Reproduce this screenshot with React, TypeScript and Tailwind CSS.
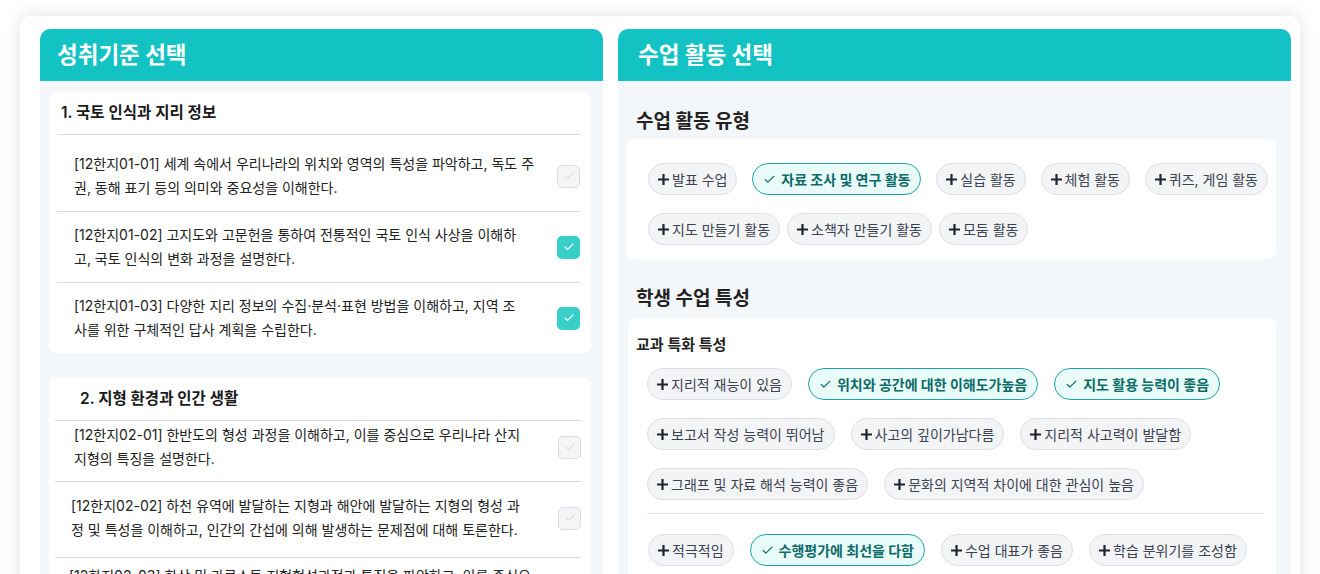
import React from 'react'
import { Check } from 'lucide-react'

interface Criterion {
  lines: string[]
  checked: boolean
}

const unit1: Criterion[] = [
  {
    lines: [
      '[12한지01-01] 세계 속에서 우리나라의 위치와 영역의 특성을 파악하고, 독도 주',
      '권, 동해 표기 등의 의미와 중요성을 이해한다.',
    ],
    checked: false,
  },
  {
    lines: [
      '[12한지01-02] 고지도와 고문헌을 통하여 전통적인 국토 인식 사상을 이해하',
      '고, 국토 인식의 변화 과정을 설명한다.',
    ],
    checked: true,
  },
  {
    lines: [
      '[12한지01-03] 다양한 지리 정보의 수집·분석·표현 방법을 이해하고, 지역 조',
      '사를 위한 구체적인 답사 계획을 수립한다.',
    ],
    checked: true,
  },
]

const unit2: Criterion[] = [
  {
    lines: [
      '[12한지02-01] 한반도의 형성 과정을 이해하고, 이를 중심으로 우리나라 산지',
      '지형의 특징을 설명한다.',
    ],
    checked: false,
  },
  {
    lines: [
      '[12한지02-02] 하천 유역에 발달하는 지형과 해안에 발달하는 지형의 형성 과',
      '정 및 특성을 이해하고, 인간의 간섭에 의해 발생하는 문제점에 대해 토론한다.',
    ],
    checked: false,
  },
  {
    lines: [
      '[12한지02-03] 화산 및 카르스트 지형형성과정과 특징을 파악하고, 이를 중심으',
      '로 지형 경관의 가치와 보전 방안을 탐구한다.',
    ],
    checked: false,
  },
]

const activityRow1 = [
  { label: '발표 수업', selected: false },
  { label: '자료 조사 및 연구 활동', selected: true },
  { label: '실습 활동', selected: false },
  { label: '체험 활동', selected: false },
  { label: '퀴즈, 게임 활동', selected: false },
]

const activityRow2 = [
  { label: '지도 만들기 활동', selected: false },
  { label: '소책자 만들기 활동', selected: false },
  { label: '모둠 활동', selected: false },
]

const subjectTraits = [
  { label: '지리적 재능이 있음', selected: false },
  { label: '위치와 공간에 대한 이해도가높음', selected: true },
  { label: '지도 활용 능력이 좋음', selected: true },
  { label: '보고서 작성 능력이 뛰어남', selected: false },
  { label: '사고의 깊이가남다름', selected: false },
  { label: '지리적 사고력이 발달함', selected: false },
  { label: '그래프 및 자료 해석 능력이 좋음', selected: false },
  { label: '문화의 지역적 차이에 대한 관심이 높음', selected: false },
]

const generalTraits = [
  { label: '적극적임', selected: false },
  { label: '수행평가에 최선을 다함', selected: true },
  { label: '수업 대표가 좋음', selected: false },
  { label: '학습 분위기를 조성함', selected: false },
]

function PlusMark() {
  return (
    <svg width="11" height="11" viewBox="0 0 11 11" className="shrink-0">
      <path d="M5.5 0.8v9.4M0.8 5.5h9.4" stroke="#1f2430" strokeWidth="2.2" strokeLinecap="square" />
    </svg>
  )
}

function Chip({ label, selected }: { label: string; selected: boolean }) {
  if (selected) {
    return (
      <span className="inline-flex h-8 shrink-0 items-center gap-[5px] whitespace-nowrap rounded-full border border-[#1fa6a2] bg-[#e8fbf9] px-[10px] text-[14px] font-bold text-[#0d6b68]">
        <Check className="h-[13px] w-[13px] shrink-0" strokeWidth={2} />
        {label}
      </span>
    )
  }
  return (
    <span className="inline-flex h-8 shrink-0 items-center gap-[3px] whitespace-nowrap rounded-full border border-[#dcdfe5] bg-[#f3f4f6] px-[9px] text-[14px] text-[#3b4250]">
      <PlusMark />
      {label}
    </span>
  )
}

function Checkbox({ checked }: { checked: boolean }) {
  if (checked) {
    return (
      <span className="flex h-[23px] w-[23px] shrink-0 items-center justify-center rounded-[5px] bg-[#38cfc9]">
        <Check className="h-3 w-3 text-white" strokeWidth={2.2} />
      </span>
    )
  }
  return (
    <span className="flex h-[23px] w-[23px] shrink-0 items-center justify-center rounded-[5px] border border-[#d9dce2] bg-[#f4f5f7]">
      <Check className="h-3 w-3 text-[#cfd3da]" strokeWidth={2} />
    </span>
  )
}

function CriterionText({ lines }: { lines: string[] }) {
  return (
    <p className="flex-1 whitespace-nowrap text-[14px] leading-6 text-[#222]">
      {lines.map((line, i) => (
        <React.Fragment key={i}>
          {line}
          {i < lines.length - 1 && <br />}
        </React.Fragment>
      ))}
    </p>
  )
}

function PanelHeader({ title, pad }: { title: string; pad: string }) {
  return (
    <div className={`flex h-[52px] items-center rounded-t-[10px] bg-[#13c3c3] ${pad}`}>
      <h2 className="text-[22.5px] font-bold text-white">{title}</h2>
    </div>
  )
}

export default function App() {
  return (
    <div className="min-h-screen bg-white pt-4 font-[family-name:Inter,'Noto_Sans_CJK_KR',sans-serif]">
      <div className="ml-5 flex w-[1280px] gap-[15px] rounded-[10px] bg-white pl-5 pr-[9px] pt-[13px] shadow-[0_0_18px_rgba(0,0,0,0.13)]">
        {/* 성취기준 */}
        <section className="w-[563px] shrink-0">
          <PanelHeader title="성취기준 선택" pad="px-[17px]" />
          <div className="flex flex-col gap-6 bg-[#f3f7fa] pb-6 pl-[9px] pr-[12px] pt-[10px]">
            <div className="rounded-lg bg-white pl-2 pr-[11px]">
              <h3 className="border-b border-[#d6d9df] py-[10px] pl-1 text-[15.5px] font-semibold leading-[23px] text-[#1a1a1a]">
                1. 국토 인식과 지리 정보
              </h3>
              {unit1.map((item, i) => (
                <div
                  key={i}
                  className={`flex items-center pl-[17px] ${i === 0 ? 'pb-[11px] pt-[17px]' : 'py-[11px]'} ${i < unit1.length - 1 ? 'border-b border-[#d6d9df]' : ''}`}
                >
                  <CriterionText lines={item.lines} />
                  <Checkbox checked={item.checked} />
                </div>
              ))}
            </div>

            <div className="rounded-lg bg-white pl-[6px] pr-[10px]">
              <h3 className="border-b border-[#d6d9df] py-[10px] pl-[25px] text-[15.5px] font-semibold leading-[23px] text-[#1a1a1a]">
                2. 지형 환경과 인간 생활
              </h3>
              <div className="flex items-center border-b border-[#d6d9df] pb-[10px] pl-[19px] pt-[2px]">
                <CriterionText lines={unit2[0].lines} />
                <Checkbox checked={unit2[0].checked} />
              </div>
              <div className="flex items-center border-b border-[#d6d9df] pb-[15px] pl-[16px] pt-[12px]">
                <CriterionText lines={unit2[1].lines} />
                <Checkbox checked={unit2[1].checked} />
              </div>
              <div className="-mr-[3px] ml-[5px] flex items-center pb-[11px] pl-[9px] pt-[6px]">
                <CriterionText lines={unit2[2].lines} />
                <Checkbox checked={unit2[2].checked} />
              </div>
            </div>
          </div>
        </section>

        {/* 수업 활동 */}
        <section className="flex-1">
          <PanelHeader title="수업 활동 선택" pad="px-5" />
          <div className="bg-[#f3f7fa] pb-6 pt-[28px]">
            <h3 className="pl-[18px] text-[19px] font-bold leading-[26px] text-[#222]">수업 활동 유형</h3>
            <div className="ml-2 mr-[15px] mt-[4px] flex flex-col gap-[18px] rounded-lg bg-white pb-[14px] pl-[22px] pr-2 pt-6">
              <div className="flex justify-between">
                {activityRow1.map((c) => (
                  <Chip key={c.label} {...c} />
                ))}
              </div>
              <div className="flex gap-[7px]">
                {activityRow2.map((c) => (
                  <Chip key={c.label} {...c} />
                ))}
              </div>
            </div>

            <h3 className="mt-[27px] pl-[18px] text-[19px] font-bold leading-[26px] text-[#222]">학생 수업 특성</h3>
            <div className="ml-[10px] mr-[15px] mt-[6px] rounded-lg bg-white pb-6 pl-2 pr-3 pt-[17px]">
              <h4 className="text-[15px] font-semibold leading-5 text-[#222]">교과 특화 특성</h4>
              <div className="mt-[13px] flex flex-wrap gap-x-4 gap-y-[18px] pl-[11px]">
                {subjectTraits.map((c) => (
                  <Chip key={c.label} {...c} />
                ))}
              </div>
              <div className="ml-[11px] mt-[13px] border-t border-[#e3e6ea]" />
              <div className="mt-5 flex flex-wrap gap-x-4 gap-y-[18px] pl-[12px]">
                {generalTraits.map((c) => (
                  <Chip key={c.label} {...c} />
                ))}
              </div>
            </div>
          </div>
        </section>
      </div>
    </div>
  )
}
